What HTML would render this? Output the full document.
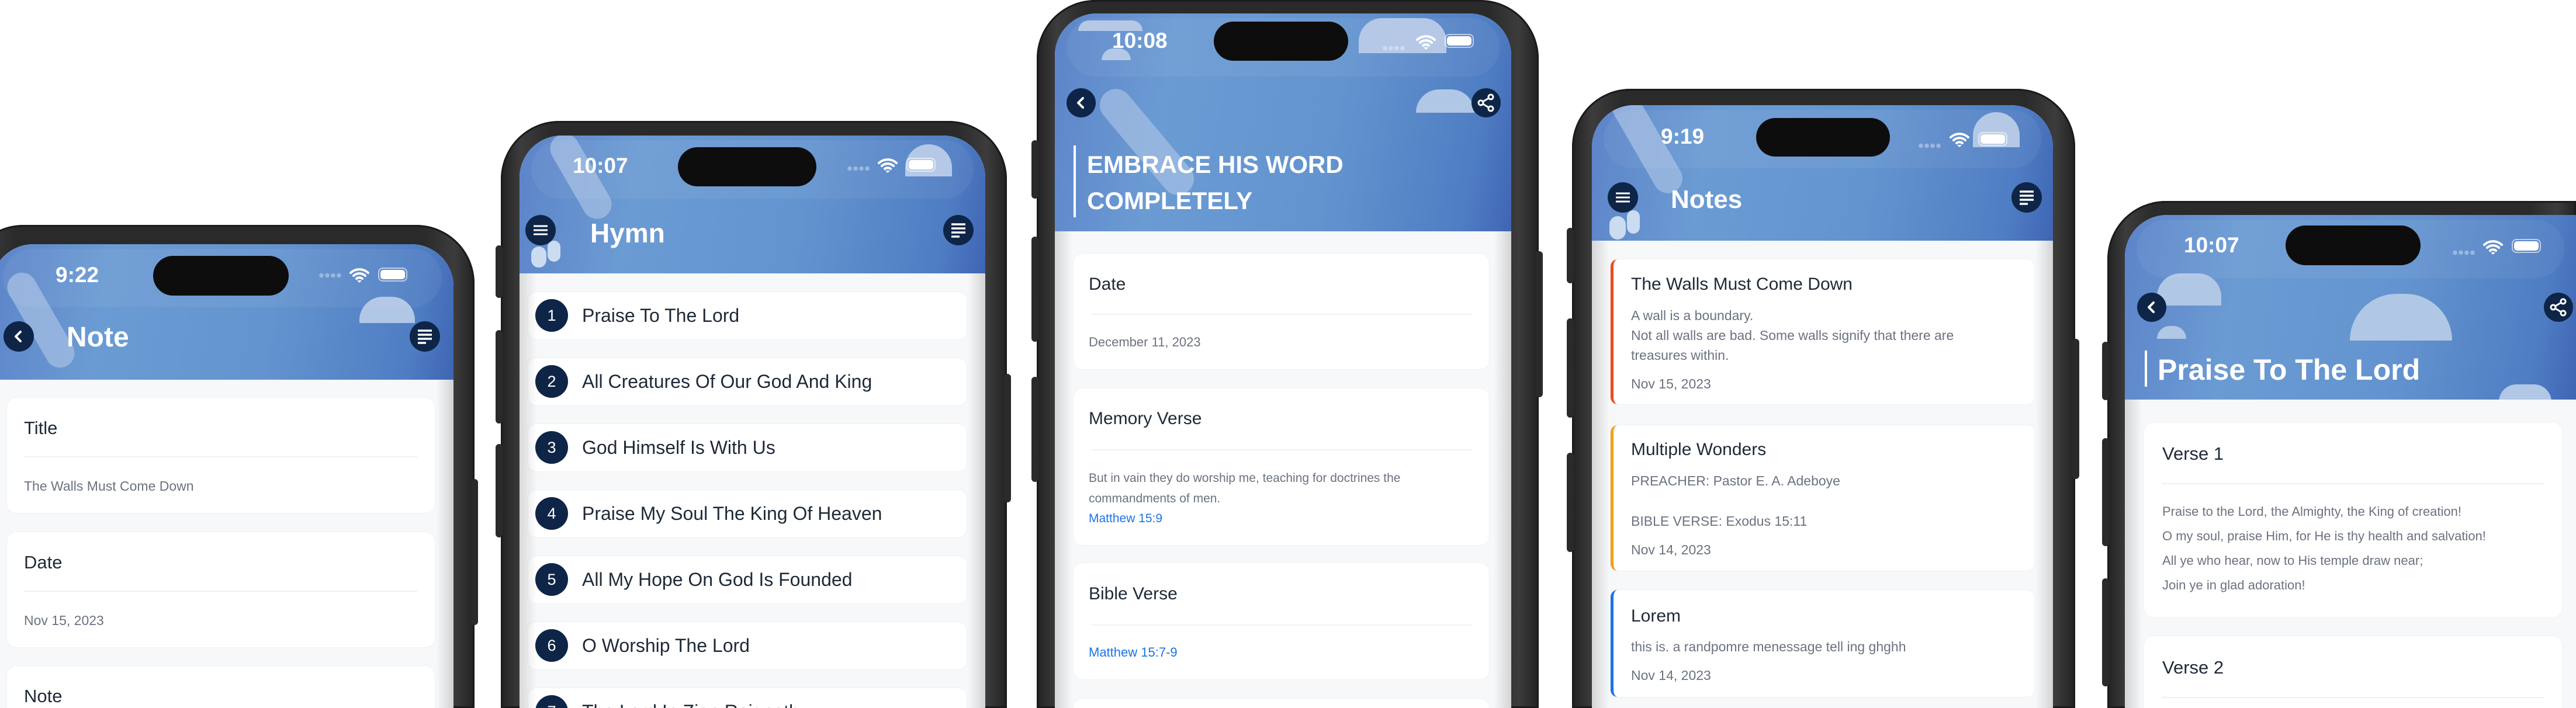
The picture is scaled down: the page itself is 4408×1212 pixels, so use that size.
<!DOCTYPE html>
<html><head><meta charset="utf-8"><style>
*{margin:0;padding:0;box-sizing:border-box}
html,body{width:4408px;height:1212px;overflow:hidden}
body{background:#fff;position:relative;font-family:"Liberation Sans",sans-serif}
.frame{position:absolute;border-radius:100px 100px 0 0;background:linear-gradient(90deg,#222 0%,#3c3c3c 4%,#2a2a2a 10%,#2a2a2a 90%,#3c3c3c 96%,#222 100%);box-shadow:inset 0 0 0 3px #1b1b1b}
.btn-side{position:absolute;background:#2a2a2a;border-radius:6px}
.screen{position:absolute;border-radius:72px 72px 0 0;overflow:hidden;background:#f6f8fa}
.hdr{position:absolute;left:0;top:0;width:100%;background:linear-gradient(100deg,#5c84c9 0%,#6b9bd3 25%,#6494cf 60%,#4f7dc3 90%,#3f65b4 100%);overflow:hidden}
.sbar{position:absolute;left:20px;right:20px;top:8px;height:100px;border-radius:50px;background:rgba(255,255,255,0.05)}
.time{position:absolute;color:#fff;font-weight:bold;font-size:37px;line-height:40px}
.notch{position:absolute;background:#0d0d0d;border-radius:40px}
.dots{position:absolute;height:9px;width:40px;background:radial-gradient(circle,rgba(255,255,255,.35) 3.5px,transparent 4px) 0 0/10px 9px repeat-x}
.bat{position:absolute;width:50px;height:24px;border:2px solid rgba(255,255,255,.6);border-radius:8px;padding:2px}
.bat i{display:block;width:100%;height:100%;background:#fff;border-radius:5px}
.cbtn{position:absolute;width:52px;height:52px;border-radius:50%;background:#0e2547}
.cbtn svg{position:absolute;left:0;top:0}
.htitle{position:absolute;color:#fff;font-weight:bold;white-space:nowrap}
.bar{position:absolute;width:4px;background:#fff}
.cloud{position:absolute;background:#b1c7e6;border-radius:40px 40px 0 0}
.blob{position:absolute;background:#a6c0e4;opacity:.7}
.card{position:absolute;background:#fff;border-radius:16px;box-shadow:0 0 0 1px #eef1f5}
.lbl{position:absolute;color:#1f2937;font-size:31px;white-space:nowrap;line-height:36px}
.div{position:absolute;height:2px;background:#eef0f4}
.val{position:absolute;color:#6b7280;font-size:23px;white-space:nowrap}
.link{color:#1a73e8}
.edge{position:absolute;top:0;bottom:0;width:30px}
.num{position:absolute;width:56px;height:56px;border-radius:50%;background:#0e2547;color:#fff;font-size:27px;text-align:center;line-height:56px}
.item{position:absolute;background:#fff;border-radius:14px;box-shadow:0 0 0 1px #eef1f5}
.itxt{position:absolute;left:92px;top:0;line-height:81px;font-size:32px;color:#1f2937;white-space:nowrap}
.ncard{position:absolute;background:#fff;border-radius:12px;box-shadow:0 0 0 1px #eef1f5;border-left:5px solid #f04a1e}
.nt{position:absolute;left:30px;color:#1f2937;font-size:30px;line-height:36px;white-space:nowrap}
.nb{position:absolute;left:30px;color:#6b7280;font-size:23px;white-space:nowrap;line-height:34px}
</style></head><body>

<!-- PHONE 1 -->
<div class="frame" style="left:-60px;top:385px;width:872px;height:827px"></div>
<div class="btn-side" style="left:806px;top:820px;width:12px;height:250px"></div>
<div class="screen" style="left:-15px;top:418px;width:791px;height:794px">
  <div class="hdr" style="height:232px">
    <div class="blob" style="left:60px;top:40px;width:50px;height:180px;border-radius:30px;transform:rotate(-30deg)"></div>
    <div class="cloud" style="left:630px;top:90px;width:95px;height:45px"></div>
    <div class="sbar"></div>
  </div>
  <div class="time" style="left:110px;top:33px">9:22</div>
  <div class="notch" style="left:277px;top:20px;width:232px;height:68px"></div>
  <div class="dots" style="left:560px;top:49px"></div>
  <svg style="position:absolute;left:612px;top:40px" width="36" height="26" viewBox="0 0 36 26"><path d="M3 9a22 22 0 0 1 30 0M8 14a15 15 0 0 1 20 0M13 19a8 8 0 0 1 10 0" stroke="#fff" stroke-width="4" fill="none" stroke-linecap="round"/><path d="M14 22l4 4 4-4z" fill="#fff"/></svg>
  <div class="bat" style="left:662px;top:40px"><i></i></div>
  <div class="cbtn" style="left:21px;top:132px"><svg width="52" height="52"><path d="M29 18l-8 8 8 8" stroke="#fff" stroke-width="4" fill="none" stroke-linecap="round" stroke-linejoin="round"/></svg></div>
  <div class="htitle" style="left:129px;top:132px;font-size:48px">Note</div>
  <div class="cbtn" style="left:716px;top:132px"><svg width="52" height="52"><path d="M14 16h24M14 23h24M14 30h24M14 37h14" stroke="#fff" stroke-width="3.5"/></svg></div>
  <div class="card" style="left:27px;top:263px;width:732px;height:197px">
    <div class="lbl" style="left:29px;top:34px">Title</div><div class="div" style="left:29px;top:100px;width:673px"></div>
    <div class="val" style="left:29px;top:138px">The Walls Must Come Down</div></div>
  <div class="card" style="left:27px;top:493px;width:732px;height:197px">
    <div class="lbl" style="left:29px;top:34px">Date</div><div class="div" style="left:29px;top:100px;width:673px"></div>
    <div class="val" style="left:29px;top:138px">Nov 15, 2023</div></div>
  <div class="card" style="left:27px;top:722px;width:732px;height:197px">
    <div class="lbl" style="left:29px;top:34px">Note</div></div>
  <div class="edge" style="right:0;top:232px;background:linear-gradient(90deg,rgba(0,0,0,0),rgba(0,0,0,.15))"></div>
</div>

<!-- PHONE 2 -->
<div class="frame" style="left:857px;top:207px;width:866px;height:1005px"></div>
<div class="btn-side" style="left:848px;top:420px;width:12px;height:90px"></div>
<div class="btn-side" style="left:848px;top:565px;width:12px;height:160px"></div>
<div class="btn-side" style="left:848px;top:760px;width:12px;height:160px"></div>
<div class="btn-side" style="left:1718px;top:640px;width:12px;height:220px"></div>
<div class="screen" style="left:889px;top:232px;width:797px;height:980px">
  <div class="hdr" style="height:236px">
    <div class="blob" style="left:80px;top:-10px;width:50px;height:160px;border-radius:30px;transform:rotate(-30deg)"></div>
    <div class="blob" style="left:20px;top:190px;width:26px;height:36px;border-radius:20px;background:#d7e4f4;opacity:.9"></div>
    <div class="blob" style="left:48px;top:180px;width:22px;height:36px;border-radius:20px;background:#d7e4f4;opacity:.9"></div>
    <div class="cloud" style="left:660px;top:15px;width:80px;height:55px"></div>
    <div class="sbar"></div>
  </div>
  <div class="time" style="left:91px;top:32px">10:07</div>
  <div class="notch" style="left:271px;top:20px;width:237px;height:67px"></div>
  <div class="dots" style="left:560px;top:52px"></div>
  <svg style="position:absolute;left:612px;top:38px" width="36" height="26" viewBox="0 0 36 26"><path d="M3 9a22 22 0 0 1 30 0M8 14a15 15 0 0 1 20 0M13 19a8 8 0 0 1 10 0" stroke="#fff" stroke-width="4" fill="none" stroke-linecap="round"/><path d="M14 22l4 4 4-4z" fill="#fff"/></svg>
  <div class="bat" style="left:662px;top:38px"><i></i></div>
  <div class="cbtn" style="left:10px;top:136px"><svg width="52" height="52"><path d="M14 19h24M14 26h24M14 33h24" stroke="#fff" stroke-width="3"/></svg></div>
  <div class="htitle" style="left:121px;top:140px;font-size:46px">Hymn</div>
  <div class="cbtn" style="left:725px;top:136px"><svg width="52" height="52"><path d="M14 16h24M14 23h24M14 30h24M14 37h14" stroke="#fff" stroke-width="3.5"/></svg></div>
  <div class="item" style="left:15px;top:268px;width:750px;height:81px"><div class="num" style="left:12px;top:12px">1</div><div class="itxt">Praise To The Lord</div></div>
  <div class="item" style="left:15px;top:381px;width:750px;height:81px"><div class="num" style="left:12px;top:12px">2</div><div class="itxt">All Creatures Of Our God And King</div></div>
  <div class="item" style="left:15px;top:494px;width:750px;height:81px"><div class="num" style="left:12px;top:12px">3</div><div class="itxt">God Himself Is With Us</div></div>
  <div class="item" style="left:15px;top:607px;width:750px;height:81px"><div class="num" style="left:12px;top:12px">4</div><div class="itxt">Praise My Soul The King Of Heaven</div></div>
  <div class="item" style="left:15px;top:720px;width:750px;height:81px"><div class="num" style="left:12px;top:12px">5</div><div class="itxt">All My Hope On God Is Founded</div></div>
  <div class="item" style="left:15px;top:833px;width:750px;height:81px"><div class="num" style="left:12px;top:12px">6</div><div class="itxt">O Worship The Lord</div></div>
  <div class="item" style="left:15px;top:946px;width:750px;height:81px"><div class="num" style="left:12px;top:12px">7</div><div class="itxt">The Lord In Zion Reigneth</div></div>
  <div class="edge" style="left:0;top:236px;background:linear-gradient(270deg,rgba(0,0,0,0),rgba(0,0,0,.12))"></div>
  <div class="edge" style="right:0;top:236px;background:linear-gradient(90deg,rgba(0,0,0,0),rgba(0,0,0,.15))"></div>
</div>

<!-- PHONE 3 -->
<div class="frame" style="left:1774px;top:0px;width:859px;height:1212px"></div>
<div class="btn-side" style="left:1765px;top:240px;width:12px;height:100px"></div>
<div class="btn-side" style="left:1765px;top:405px;width:12px;height:180px"></div>
<div class="btn-side" style="left:1765px;top:645px;width:12px;height:180px"></div>
<div class="btn-side" style="left:2628px;top:430px;width:12px;height:250px"></div>
<div class="screen" style="left:1805px;top:23px;width:781px;height:1189px">
  <div class="hdr" style="height:373px">
    <div class="blob" style="left:130px;top:110px;width:55px;height:220px;border-radius:30px;transform:rotate(-40deg)"></div>
    <div class="cloud" style="left:40px;top:12px;width:110px;height:18px"></div>
    <div class="cloud" style="left:80px;top:60px;width:50px;height:20px"></div>
    <div class="cloud" style="left:520px;top:8px;width:150px;height:60px"></div>
    <div class="cloud" style="left:618px;top:130px;width:100px;height:40px"></div>
    <div class="sbar"></div>
  </div>
  <div class="time" style="left:98px;top:27px">10:08</div>
  <div class="notch" style="left:272px;top:14px;width:230px;height:67px"></div>
  <div class="dots" style="left:560px;top:55px"></div>
  <svg style="position:absolute;left:617px;top:36px" width="36" height="26" viewBox="0 0 36 26"><path d="M3 9a22 22 0 0 1 30 0M8 14a15 15 0 0 1 20 0M13 19a8 8 0 0 1 10 0" stroke="#fff" stroke-width="4" fill="none" stroke-linecap="round"/><path d="M14 22l4 4 4-4z" fill="#fff"/></svg>
  <div class="bat" style="left:667px;top:35px"><i></i></div>
  <div class="cbtn" style="left:20px;top:128px;width:50px;height:50px"><svg width="50" height="50"><path d="M28 17l-8 8 8 8" stroke="#fff" stroke-width="4" fill="none" stroke-linecap="round" stroke-linejoin="round"/></svg></div>
  <div class="cbtn" style="left:713px;top:128px;width:50px;height:50px"><svg width="50" height="50"><circle cx="33" cy="15" r="4" stroke="#fff" stroke-width="3" fill="none"/><circle cx="16" cy="25" r="4" stroke="#fff" stroke-width="3" fill="none"/><circle cx="33" cy="35" r="4" stroke="#fff" stroke-width="3" fill="none"/><path d="M19.5 23l10-6M19.5 27l10 6" stroke="#fff" stroke-width="3"/></svg></div>
  <div class="bar" style="left:32px;top:226px;height:123px"></div>
  <div class="htitle" style="left:55px;top:228px;font-size:42px;line-height:62px">EMBRACE HIS WORD<br>COMPLETELY</div>
  <div class="card" style="left:32px;top:411px;width:711px;height:198px">
    <div class="lbl" style="left:26px;top:35px;font-size:30px">Date</div><div class="div" style="left:30px;top:103px;width:652px"></div>
    <div class="val" style="left:26px;top:139px;font-size:22px">December 11, 2023</div></div>
  <div class="card" style="left:32px;top:642px;width:711px;height:268px">
    <div class="lbl" style="left:26px;top:34px;font-size:30px">Memory Verse</div><div class="div" style="left:30px;top:104px;width:652px"></div>
    <div class="val" style="left:26px;top:137px;font-size:21px;line-height:34.5px;white-space:normal;width:655px">But in vain they do worship me, teaching for doctrines the commandments of men.<br><span class="link">Matthew 15:9</span></div></div>
  <div class="card" style="left:32px;top:941px;width:711px;height:199px">
    <div class="lbl" style="left:26px;top:35px;font-size:30px">Bible Verse</div><div class="div" style="left:30px;top:105px;width:652px"></div>
    <div class="val link" style="left:26px;top:140px;font-size:22px">Matthew 15:7-9</div></div>
  <div class="card" style="left:32px;top:1173px;width:711px;height:200px"></div>
  <div class="edge" style="left:0;top:373px;background:linear-gradient(270deg,rgba(0,0,0,0),rgba(0,0,0,.14))"></div>
  <div class="edge" style="right:0;top:373px;background:linear-gradient(90deg,rgba(0,0,0,0),rgba(0,0,0,.15))"></div>
</div>

<!-- PHONE 4 -->
<div class="frame" style="left:2690px;top:152px;width:861px;height:1060px"></div>
<div class="btn-side" style="left:2681px;top:390px;width:12px;height:95px"></div>
<div class="btn-side" style="left:2681px;top:545px;width:12px;height:170px"></div>
<div class="btn-side" style="left:2681px;top:775px;width:12px;height:170px"></div>
<div class="btn-side" style="left:3546px;top:580px;width:12px;height:240px"></div>
<div class="screen" style="left:2724px;top:180px;width:789px;height:1032px">
  <div class="hdr" style="height:232px">
    <div class="blob" style="left:70px;top:-30px;width:50px;height:190px;border-radius:30px;transform:rotate(-30deg)"></div>
    <div class="blob" style="left:30px;top:190px;width:28px;height:40px;border-radius:20px;background:#d7e4f4;opacity:.9"></div>
    <div class="blob" style="left:60px;top:180px;width:22px;height:40px;border-radius:20px;background:#d7e4f4;opacity:.9"></div>
    <div class="cloud" style="left:652px;top:12px;width:80px;height:60px"></div>
    <div class="sbar"></div>
  </div>
  <div class="time" style="left:118px;top:34px">9:19</div>
  <div class="notch" style="left:281px;top:22px;width:229px;height:66px"></div>
  <div class="dots" style="left:558px;top:65px"></div>
  <svg style="position:absolute;left:611px;top:46px" width="36" height="26" viewBox="0 0 36 26"><path d="M3 9a22 22 0 0 1 30 0M8 14a15 15 0 0 1 20 0M13 19a8 8 0 0 1 10 0" stroke="#fff" stroke-width="4" fill="none" stroke-linecap="round"/><path d="M14 22l4 4 4-4z" fill="#fff"/></svg>
  <div class="bat" style="left:661px;top:46px"><i></i></div>
  <div class="cbtn" style="left:27px;top:132px"><svg width="52" height="52"><path d="M14 19h24M14 26h24M14 33h24" stroke="#fff" stroke-width="3"/></svg></div>
  <div class="htitle" style="left:135px;top:137px;font-size:44px">Notes</div>
  <div class="cbtn" style="left:718px;top:132px"><svg width="52" height="52"><path d="M14 16h24M14 23h24M14 30h24M14 37h14" stroke="#fff" stroke-width="3.5"/></svg></div>
  <div class="ncard" style="left:32px;top:264px;width:725px;height:248px">
    <div class="nt" style="top:25px">The Walls Must Come Down</div>
    <div class="nb" style="top:79px">A wall is a boundary.<br>Not all walls are bad. Some walls signify that there are<br>treasures within.</div>
    <div class="nb" style="top:196px">Nov 15, 2023</div></div>
  <div class="ncard" style="left:32px;top:548px;width:725px;height:249px;border-left-color:#f5a00f">
    <div class="nt" style="top:24px">Multiple Wonders</div>
    <div class="nb" style="top:78px">PREACHER: Pastor E. A. Adeboye</div>
    <div class="nb" style="top:147px">BIBLE VERSE: Exodus 15:11</div>
    <div class="nb" style="top:196px">Nov 14, 2023</div></div>
  <div class="ncard" style="left:32px;top:830px;width:725px;height:183px;border-left-color:#1a73e8">
    <div class="nt" style="top:27px">Lorem</div>
    <div class="nb" style="top:80px">this is. a randpomre menessage tell ing ghghh</div>
    <div class="nb" style="top:129px">Nov 14, 2023</div></div>
  <div class="edge" style="left:0;top:232px;background:linear-gradient(270deg,rgba(0,0,0,0),rgba(0,0,0,.14))"></div>
  <div class="edge" style="right:0;top:232px;background:linear-gradient(90deg,rgba(0,0,0,0),rgba(0,0,0,.15))"></div>
</div>

<!-- PHONE 5 -->
<div class="frame" style="left:3606px;top:344px;width:802px;height:868px;border-radius:100px 0 0 0"></div>
<div class="btn-side" style="left:3597px;top:585px;width:12px;height:100px"></div>
<div class="btn-side" style="left:3597px;top:750px;width:12px;height:185px"></div>
<div class="btn-side" style="left:3597px;top:990px;width:12px;height:185px"></div>
<div class="screen" style="left:3636px;top:368px;width:772px;height:844px;border-radius:72px 0 0 0">
  <div class="hdr" style="height:316px">
    <div class="cloud" style="left:55px;top:100px;width:110px;height:55px"></div>
    <div class="cloud" style="left:55px;top:190px;width:50px;height:22px"></div>
    <div class="cloud" style="left:385px;top:135px;width:175px;height:80px;border-radius:80px 80px 0 0"></div>
    <div class="cloud" style="left:640px;top:290px;width:90px;height:30px"></div>
    <div class="sbar"></div>
  </div>
  <div class="time" style="left:101px;top:32px">10:07</div>
  <div class="notch" style="left:275px;top:18px;width:231px;height:68px"></div>
  <div class="dots" style="left:560px;top:60px"></div>
  <svg style="position:absolute;left:612px;top:42px" width="36" height="26" viewBox="0 0 36 26"><path d="M3 9a22 22 0 0 1 30 0M8 14a15 15 0 0 1 20 0M13 19a8 8 0 0 1 10 0" stroke="#fff" stroke-width="4" fill="none" stroke-linecap="round"/><path d="M14 22l4 4 4-4z" fill="#fff"/></svg>
  <div class="bat" style="left:662px;top:41px"><i></i></div>
  <div class="cbtn" style="left:21px;top:133px;width:50px;height:50px"><svg width="50" height="50"><path d="M28 17l-8 8 8 8" stroke="#fff" stroke-width="4" fill="none" stroke-linecap="round" stroke-linejoin="round"/></svg></div>
  <div class="cbtn" style="left:717px;top:133px;width:50px;height:50px"><svg width="50" height="50"><circle cx="33" cy="15" r="4" stroke="#fff" stroke-width="3" fill="none"/><circle cx="16" cy="25" r="4" stroke="#fff" stroke-width="3" fill="none"/><circle cx="33" cy="35" r="4" stroke="#fff" stroke-width="3" fill="none"/><path d="M19.5 23l10-6M19.5 27l10 6" stroke="#fff" stroke-width="3"/></svg></div>
  <div class="bar" style="left:34px;top:232px;height:62px"></div>
  <div class="htitle" style="left:56px;top:236px;font-size:50px">Praise To The Lord</div>
  <div class="card" style="left:33px;top:355px;width:715px;height:334px">
    <div class="lbl" style="left:31px;top:36px;font-size:31px">Verse 1</div><div class="div" style="left:30px;top:104px;width:655px"></div>
    <div class="val" style="left:31px;top:132px;font-size:22px;line-height:42px">Praise to the Lord, the Almighty, the King of creation!<br>O my soul, praise Him, for He is thy health and salvation!<br>All ye who hear, now to His temple draw near;<br>Join ye in glad adoration!</div></div>
  <div class="card" style="left:33px;top:721px;width:715px;height:334px">
    <div class="lbl" style="left:31px;top:36px;font-size:31px">Verse 2</div><div class="div" style="left:30px;top:104px;width:655px"></div></div>
  <div class="edge" style="left:0;top:316px;background:linear-gradient(270deg,rgba(0,0,0,0),rgba(0,0,0,.14))"></div>
</div>

</body></html>
